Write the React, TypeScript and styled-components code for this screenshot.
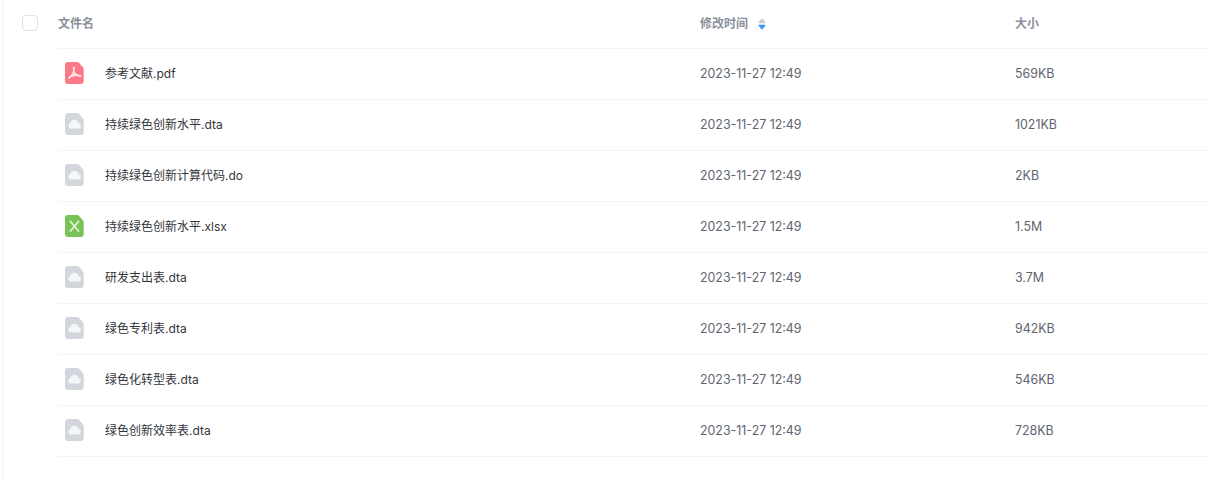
import styled, { createGlobalStyle } from "styled-components";

const GlobalStyle = createGlobalStyle`
  html, body {
    margin: 0;
    padding: 0;
    background: #fff;
    font-family: "Inter", "Noto Sans CJK SC", sans-serif;
  }
`;

const Page = styled.div`
  width: 1211px;
  height: 482px;
  overflow: hidden;
  box-sizing: border-box;
  margin-left: 2px;
  border-left: 1px solid #f3f4f6;
`;

const Grid = styled.div`
  display: grid;
  grid-template-columns: 642px 315px 1fr;
  margin-left: 55px;
  align-items: center;
  height: 51px;
  box-sizing: border-box;
  border-bottom: 1px solid #f3f4f6;
`;

const HeaderRow = styled(Grid)`
  height: 49px;
  position: relative;
`;

const Checkbox = styled.span`
  position: absolute;
  left: -36px;
  top: 15px;
  width: 16px;
  height: 16px;
  box-sizing: border-box;
  border: 1px solid #dfe1e6;
  border-radius: 4px;
`;

const HeadCell = styled.div`
  display: flex;
  align-items: center;
  gap: 10px;
  font-size: 12px;
  font-weight: 600;
  color: #8a909b;
  margin-top: -3px;
`;

const SortIcon = styled.svg`
  width: 8px;
  height: 12px;
  margin-top: 2px;
`;

const NameCell = styled.div`
  display: flex;
  align-items: center;
  gap: 21px;
  padding-left: 7px;
  font-size: 12px;
  color: #33353a;
  margin-top: -2px;
`;

const NameText = styled.span`
  margin-top: -2px;
`;

const FileIcon = styled.svg`
  width: 19px;
  height: 22px;
  flex: none;
`;

const Cell = styled.div`
  font-size: 12.4px;
  color: #5f6570;
  margin-top: -2px;
`;

type Kind = "pdf" | "cloud" | "xls";

const sheet = "M3 0h9c.8 0 1.500.3 2 .8l3.900 4.400c.5.5.8 1.200.8 2V19a3 3 0 0 1-3 3H3a3 3 0 0 1-3-3V3a3 3 0 0 1 3-3z";

function Icon({ kind }: { kind: Kind }) {
  if (kind === "pdf") {
    return (
      <FileIcon viewBox="0 0 19 22">
        <path d={sheet} fill="#fb7887" />
        <path
          d="M8.800 5.500c.6 3.500-1.300 8-4.800 10.500M8.800 9.500c1 2.800 3.200 4.400 6.700 4.600M4.800 15c3.200-1.900 6.300-2.300 10-1.400"
          fill="none"
          stroke="#fde7ea"
          strokeWidth="1.800"
          strokeLinecap="round"
        />
      </FileIcon>
    );
  }
  if (kind === "xls") {
    return (
      <FileIcon viewBox="0 0 19 22">
        <path d={sheet} fill="#79c257" />
        <path
          d="M5.500 6.500l8 9.500M13.500 6.500l-8 9.500"
          fill="none"
          stroke="#e3f4d8"
          strokeWidth="1.800"
          strokeLinecap="round"
        />
      </FileIcon>
    );
  }
  return (
    <FileIcon viewBox="0 0 19 22">
      <path d={sheet} fill="#d3d6dc" />
      <path
        d="M5.800 15.500a2.800 2.800 0 0 1-.5-5.500 4.400 4.400 0 0 1 8.500.2 2.700 2.700 0 0 1-.3 5.300z"
        fill="#f5f6f8"
      />
    </FileIcon>
  );
}

const files: { name: string; size: string; kind: Kind }[] = [
  { name: "参考文献.pdf", size: "569KB", kind: "pdf" },
  { name: "持续绿色创新水平.dta", size: "1021KB", kind: "cloud" },
  { name: "持续绿色创新计算代码.do", size: "2KB", kind: "cloud" },
  { name: "持续绿色创新水平.xlsx", size: "1.5M", kind: "xls" },
  { name: "研发支出表.dta", size: "3.7M", kind: "cloud" },
  { name: "绿色专利表.dta", size: "942KB", kind: "cloud" },
  { name: "绿色化转型表.dta", size: "546KB", kind: "cloud" },
  { name: "绿色创新效率表.dta", size: "728KB", kind: "cloud" },
];

export default function App() {
  return (
    <Page>
      <GlobalStyle />
      <HeaderRow>
        <Checkbox />
        <HeadCell>文件名</HeadCell>
        <HeadCell>
          修改时间
          <SortIcon viewBox="0 0 8 12">
            <path
              d="M4 1.200L6.800 4.600H1.200z"
              fill="#c9ccd3"
              stroke="#c9ccd3"
              strokeWidth="1.400"
              strokeLinejoin="round"
            />
            <path
              d="M4 10.800L1.200 7.400h5.600z"
              fill="#2f9bf4"
              stroke="#2f9bf4"
              strokeWidth="1.400"
              strokeLinejoin="round"
            />
          </SortIcon>
        </HeadCell>
        <HeadCell>大小</HeadCell>
      </HeaderRow>
      {files.map((file) => (
        <Grid key={file.name}>
          <NameCell>
            <Icon kind={file.kind} />
            <NameText>{file.name}</NameText>
          </NameCell>
          <Cell>2023-11-27 12:49</Cell>
          <Cell>{file.size}</Cell>
        </Grid>
      ))}
    </Page>
  );
}
